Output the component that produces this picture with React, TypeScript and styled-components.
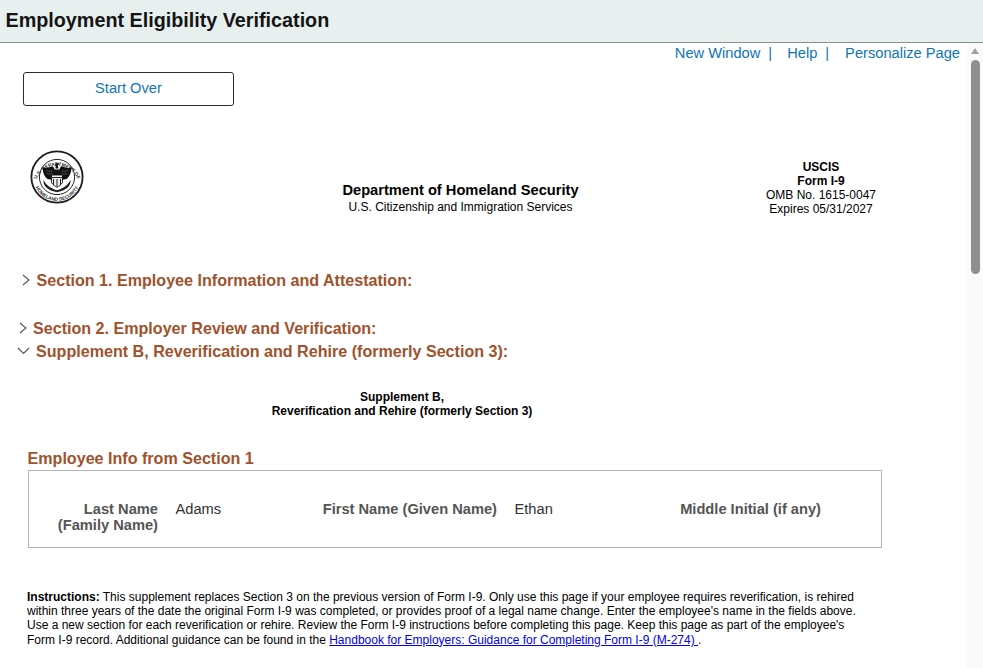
import styled, { createGlobalStyle } from 'styled-components';

const GlobalStyle = createGlobalStyle`
  html, body {
    margin: 0;
    height: 100%;
    overflow: hidden;
    background: #fff;
    font-family: "Liberation Sans", Arial, sans-serif;
  }
`;

const Page = styled.div`
  display: flex;
  flex-direction: column;
  height: 668px;
  overflow: hidden;
`;

const TitleBar = styled.header`
  flex: none;
  box-sizing: border-box;
  height: 43px;
  display: flex;
  align-items: center;
  padding: 0 0 2px 5.5px;
  background: #e7efef;
  border-bottom: 1px solid #8c8c8c;
`;

const Title = styled.h1`
  margin: 0;
  font-size: 19.75px;
  font-weight: 700;
  color: #151515;
`;

const Body = styled.div`
  flex: 1;
  display: flex;
  min-height: 0;
`;

const Content = styled.main`
  flex: 1;
  min-width: 0;
`;

const Scrollbar = styled.div`
  flex: none;
  width: 16px;
  display: flex;
  flex-direction: column;
  align-items: center;
  background: #fafafa;
`;

const ScrollArrow = styled.div`
  width: 0;
  height: 0;
  margin: 5px 0 6px;
  border-left: 4px solid transparent;
  border-right: 4px solid transparent;
  border-bottom: 6px solid #a0a0a0;
`;

const ScrollThumb = styled.div`
  width: 9px;
  height: 214px;
  margin-left: 1px;
  border-radius: 5px;
  background: #8f8f8f;
`;

const LinkBar = styled.nav`
  display: flex;
  justify-content: flex-end;
  align-items: center;
  height: 20px;
  padding-right: 7px;
  font-size: 14.67px;
`;

const TopLink = styled.a`
  color: #0f76b5;
  text-decoration: none;
`;

const Divider = styled.span<{ $after: number }>`
  color: #0f76b5;
  margin: 0 ${({ $after }) => $after}px 0 8px;
`;

const StartOver = styled.button`
  display: block;
  width: 211px;
  height: 34px;
  margin: 9px 0 0 23px;
  padding: 0 0 3px;
  background: #fff;
  border: 1px solid #2b2b2b;
  border-radius: 3px;
  color: #0f76b5;
  font: 14.67px "Liberation Sans", Arial, sans-serif;
`;

const Agency = styled.section`
  display: grid;
  grid-template-columns: 30px 54px 660px 1fr;
  height: 120px;
  margin-top: 44px;
  color: #000;
`;

const SealBox = styled.div`
  grid-column: 2;
`;

const AgencyCenter = styled.div`
  grid-column: 3;
  width: 385px;
  padding: 32px 0 0 184px;
  text-align: center;
  font-size: 12px;
  line-height: 17px;
`;

const AgencyName = styled.div`
  font-size: 14.67px;
  font-weight: 700;
`;

const FormInfo = styled.div`
  margin-left: -3px;
  width: 160px;
  padding-top: 10px;
  text-align: center;
  font-size: 12px;
  line-height: 14px;
`;

const Strong = styled.div`
  font-weight: 700;
`;

const SectionRow = styled.div<{ $top: number; $left: number; $gap: number }>`
  display: flex;
  align-items: center;
  height: 20px;
  margin-top: ${({ $top }) => $top}px;
  padding-left: ${({ $left }) => $left}px;
  gap: ${({ $gap }) => $gap}px;
`;

const SectionTitle = styled.h2`
  margin: 0;
  font-size: 16.1px;
  font-weight: 700;
  color: #a0522d;
`;

const Chevron = styled.svg`
  flex: none;
  display: block;
`;

const SupplementHeading = styled.div`
  width: 750px;
  margin: 29px 0 0 27px;
  text-align: center;
  font-size: 12px;
  font-weight: 700;
  line-height: 14px;
  color: #000;
`;

const InfoHeading = styled.h3`
  margin: 30px 0 0 27.5px;
  font-size: 16.1px;
  line-height: 20px;
  font-weight: 700;
  color: #a0522d;
`;

const InfoBox = styled.div`
  box-sizing: border-box;
  width: 854px;
  height: 78px;
  margin: 2px 0 0 28px;
  padding-top: 30px;
  display: grid;
  grid-template-columns: 129px 147px 192px 170px 154px 1fr;
  align-items: start;
  border: 1px solid #b4b4b4;
`;

const FieldLabel = styled.div`
  text-align: right;
  font-size: 14.67px;
  font-weight: 700;
  line-height: 16px;
  color: #555;
  white-space: nowrap;
`;

const FieldValue = styled.div`
  padding-left: 17.5px;
  font-size: 14.67px;
  line-height: 16px;
  color: #333;
`;

const Instructions = styled.p`
  width: 836px;
  margin: 42px 0 0 27px;
  font-size: 12px;
  line-height: 14.2px;
  color: #000;
`;

const Handbook = styled.a`
  color: #0000ee;
  text-decoration: underline;
`;

const Seal = () => (
  <svg width="54" height="54" viewBox="0 0 54 54">
    <defs>
      <path id="sealTop" d="M5.500 33a22 22 0 0 1 43 0" />
      <path id="sealBottom" d="M3.200 27a23.800 23.800 0 0 0 47.600 0" />
    </defs>
    <circle cx="27" cy="27" r="25.6" fill="#fff" stroke="#1c1c1c" strokeWidth="1.8" />
    <circle cx="27" cy="27" r="17.600" fill="#fff" stroke="#222" strokeWidth="1" />
    <text fontFamily="Liberation Sans" fontSize="4.8" fontWeight="700" fill="#2a2a2a" textAnchor="middle">
      <textPath href="#sealTop" startOffset="50%">U.S. DEPARTMENT OF</textPath>
    </text>
    <text fontFamily="Liberation Sans" fontSize="4.8" fontWeight="700" fill="#2a2a2a" textAnchor="middle">
      <textPath href="#sealBottom" startOffset="50%">HOMELAND SECURITY</textPath>
    </text>
    <path d="M12.500 17.500c3 .8 6 .4 9-1 1.500-.7 2.500.8 3 3h5c.5-2.200 1.500-3.700 3-3 3 1.400 6 1.800 9 1-.3 4.500-1.500 9-5 11.500l-5 1h-9l-5-1c-3.500-2.500-4.700-7-5-11.500z" fill="#111" />
    <path d="M16 20.500c2.500 1 4.500 1 6.500.3M16.500 23.500c2 .8 4 .8 6 .2M38 20.500c-2.500 1-4.500 1-6.500.3M37.500 23.500c-2 .8-4 .8-6 .2" fill="none" stroke="#777" strokeWidth="0.6" />
    <path d="M25.500 13.500c1.500-1 3.500-.5 4 .8l-1.700.7.7 3.500h-3z" fill="#111" />
    <path d="M21.500 25h11v7.500c-1.500 2.500-3.500 3.800-5.500 4.800-2-1-4-2.300-5.500-4.800z" fill="#eee" stroke="#111" strokeWidth="0.9" />
    <path d="M21.500 27.500h11M23.500 29v6M27 29v7.500M30.500 29v6" stroke="#222" strokeWidth="1" fill="none" />
    <path d="M13.500 30c2 4 5 6.500 8 8 2 1 4 2 5.500 2.300 1.500-.3 3.500-1.300 5.500-2.300 3-1.500 6-4 8-8 .2 3-.8 5.500-2.600 7.300-1.800 1.800-4.400 3.200-6.400 3.700l-4.500 1.200-4.500-1.200c-2-.5-4.600-1.900-6.400-3.700-1.800-1.800-2.800-4.300-2.600-7.300z" fill="#1c1c1c" />
  </svg>
);

const ChevronRight = () => (
  <Chevron width="10" height="12" viewBox="0 0 10 12">
    <path d="M2 1l6 5-6 5" fill="none" stroke="#555" strokeWidth="1.1" />
  </Chevron>
);

const ChevronDown = () => (
  <Chevron width="13" height="8" viewBox="0 0 13 8">
    <path d="M1 1l5.500 5.500L12 1" fill="none" stroke="#555" strokeWidth="1.1" />
  </Chevron>
);

export default function App() {
  return (
    <>
      <GlobalStyle />
      <Page>
        <TitleBar>
          <Title>Employment Eligibility Verification</Title>
        </TitleBar>
        <Body>
          <Content>
            <LinkBar>
              <TopLink href="#">New Window</TopLink>
              <Divider $after={15}>|</Divider>
              <TopLink href="#">Help</TopLink>
              <Divider $after={16}>|</Divider>
              <TopLink href="#">Personalize Page</TopLink>
            </LinkBar>
            <StartOver type="button">Start Over</StartOver>
            <Agency>
              <SealBox>
                <Seal />
              </SealBox>
              <AgencyCenter>
                <AgencyName>Department of Homeland Security</AgencyName>
                <div>U.S. Citizenship and Immigration Services</div>
              </AgencyCenter>
              <FormInfo>
                <Strong>USCIS</Strong>
                <Strong>Form I-9</Strong>
                <div>OMB No. 1615-0047</div>
                <div>Expires 05/31/2027</div>
              </FormInfo>
            </Agency>
            <SectionRow $top={0} $left={21} $gap={5.5}>
              <ChevronRight />
              <SectionTitle>Section 1. Employee Information and Attestation:</SectionTitle>
            </SectionRow>
            <SectionRow $top={28} $left={18} $gap={5}>
              <ChevronRight />
              <SectionTitle>Section 2. Employer Review and Verification:</SectionTitle>
            </SectionRow>
            <SectionRow $top={3} $left={17} $gap={6}>
              <ChevronDown />
              <SectionTitle>Supplement B, Reverification and Rehire (formerly Section 3):</SectionTitle>
            </SectionRow>
            <SupplementHeading>
              Supplement B,
              <br />
              Reverification and Rehire (formerly Section 3)
            </SupplementHeading>
            <InfoHeading>Employee Info from Section 1</InfoHeading>
            <InfoBox>
              <FieldLabel>
                Last Name
                <br />
                (Family Name)
              </FieldLabel>
              <FieldValue>Adams</FieldValue>
              <FieldLabel>First Name (Given Name)</FieldLabel>
              <FieldValue>Ethan</FieldValue>
              <FieldLabel>Middle Initial (if any)</FieldLabel>
            </InfoBox>
            <Instructions>
              <b>Instructions:</b> This supplement replaces Section 3 on the previous version of Form I-9. Only use
              this page if your employee requires reverification, is rehired within three years of the date the
              original Form I-9 was completed, or provides proof of a legal name change. Enter the employee's name
              in the fields above. Use a new section for each reverification or rehire. Review the Form I-9
              instructions before completing this page. Keep this page as part of the employee's Form I-9 record.
              Additional guidance can be found in the{' '}
              <Handbook href="#">Handbook for Employers: Guidance for Completing Form I-9 (M-274) </Handbook> .
            </Instructions>
          </Content>
          <Scrollbar>
            <ScrollArrow />
            <ScrollThumb />
          </Scrollbar>
        </Body>
      </Page>
    </>
  );
}
